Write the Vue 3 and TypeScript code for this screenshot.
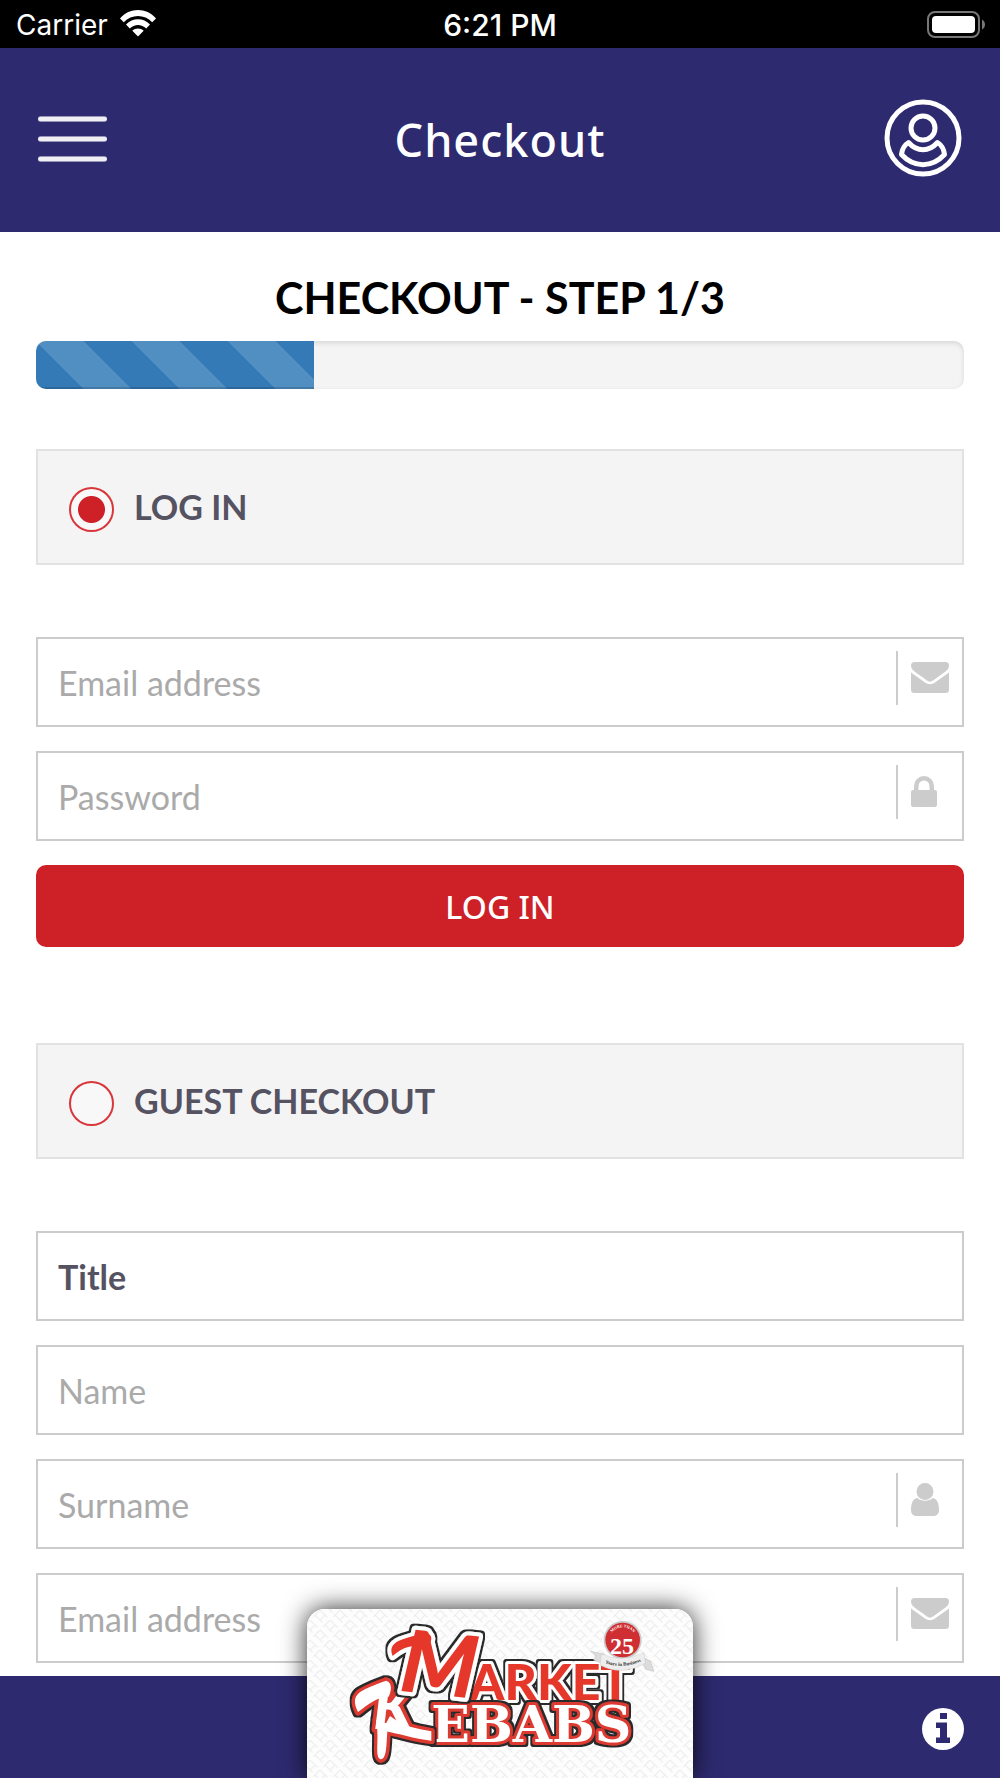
<script setup lang="ts">
import { ref } from 'vue'

type IconName = 'envelope' | 'lock' | 'user'

interface Field {
  id: string
  label: string
  type: string
  icon?: IconName
}

interface IconShape {
  width: number
  height: number
  path: string
}

const icons: Record<IconName, IconShape> = {
  envelope: {
    width: 38,
    height: 31,
    path: 'M3.500 0h31A3.500 3.500 0 0 1 38 3.500C38 6 36.500 8 34.500 9.500L22 18.500C20 20 18 20 16 18.500L3.500 9.500C1.500 8 0 6 0 3.500A3.500 3.500 0 0 1 3.500 0zM0 10.500L14 20.500C17.500 22.800 20.500 22.800 24 20.500L38 10.500V27.500A3.500 3.500 0 0 1 34.500 31H3.500A3.500 3.500 0 0 1 0 27.500z',
  },
  lock: {
    width: 26,
    height: 31,
    path: 'M3 14V10a10 10 0 0 1 20 0v4h1a2 2 0 0 1 2 2v13a2 2 0 0 1-2 2H2a2 2 0 0 1-2-2V16a2 2 0 0 1 2-2zM7.500 14h11V10a5.500 5.500 0 0 0-11 0z',
  },
  user: {
    width: 28,
    height: 33,
    path: 'M14 0a8.500 8.500 0 0 1 0 17a8.500 8.500 0 0 1 0-17zM6.500 15C9 18.500 19 18.500 21.500 15C26.500 15.500 28 21 28 27C28 30.500 26 33 22.500 33h-17C2 33 0 30.500 0 27C0 21 1.500 15.500 6.500 15z',
  },
}

const progress = 30
const mode = ref<'login' | 'guest'>('login')
const title = ref('')

const loginFields: Field[] = [
  { id: 'login-email', label: 'Email address', type: 'email', icon: 'envelope' },
  { id: 'login-password', label: 'Password', type: 'password', icon: 'lock' },
]

const guestFields: Field[] = [
  { id: 'guest-name', label: 'Name', type: 'text' },
  { id: 'guest-surname', label: 'Surname', type: 'text', icon: 'user' },
  { id: 'guest-email', label: 'Email address', type: 'email', icon: 'envelope' },
]
</script>

<template>
  <div class="page">
    <div class="status">
      <div class="carrier">
        <span>Carrier</span>
        <svg width="36" height="27" viewBox="0 0 36 27" aria-hidden="true">
          <path fill="#fff" d="M0 8.500C9.500-2.800 26.500-2.800 36 8.500L32.200 12.300C24.500 3.800 11.500 3.800 3.800 12.300zM6 14.600C12.500 7.600 23.500 7.600 30 14.600L26.200 18.400C21.500 13.700 14.500 13.700 9.800 18.400zM12.300 20.700C15.500 17.800 20.500 17.800 23.700 20.700L18 26.600z" />
        </svg>
      </div>
      <span class="clock">6:21 PM</span>
      <svg class="battery" width="59" height="28" viewBox="0 0 59 28" aria-hidden="true">
        <rect x="1" y="1" width="51" height="25" rx="7" fill="none" stroke="#777" stroke-width="2" />
        <rect x="5" y="5" width="43" height="17" rx="4" fill="#fff" />
        <path d="M55 8.500C59 10.500 59 16.500 55 18.500z" fill="#777" />
      </svg>
    </div>

    <header class="header">
      <button class="icon-button" type="button" aria-label="Menu">
        <svg width="69" height="48" viewBox="0 0 69 48">
          <path d="M3 5h63M3 25h63M3 45h63" stroke="#fff" stroke-width="6" stroke-linecap="round" opacity="0.5" />
          <path d="M2 5h65M2 25h65M2 45h65" stroke="#fff" stroke-width="4" stroke-linecap="round" opacity="0.85" />
        </svg>
      </button>
      <span class="header-title">Checkout</span>
      <button class="icon-button" type="button" aria-label="Account">
        <svg width="78" height="78" viewBox="0 0 78 78" fill="none" stroke="#fff" stroke-width="5">
          <circle cx="39" cy="39" r="36" />
          <circle cx="39" cy="29" r="12" />
          <path stroke-linejoin="round" d="M24.500 43.500C33 53 45 53 53.500 43.500C57.500 46 60 50.500 60.500 55.500C48 69 30 69 17.500 55.500C18 50.500 20.500 46 24.500 43.500z" />
        </svg>
      </button>
    </header>

    <main class="content">
      <h1 class="step">CHECKOUT - STEP 1/3</h1>
      <div class="progress" role="progressbar" aria-label="Checkout progress" :aria-valuenow="progress">
        <div class="progress-bar" :style="{ width: progress + '%' }"></div>
      </div>

      <form class="section" @submit.prevent>
        <label class="panel" for="mode-login">
          <input id="mode-login" v-model="mode" class="radio" type="radio" name="mode" value="login" />
          <span>LOG IN</span>
        </label>
        <div class="fields">
          <div v-for="field in loginFields" :key="field.id" class="field">
            <input :id="field.id" class="control" :type="field.type" :placeholder="field.label" :aria-label="field.label" />
            <span v-if="field.icon" class="field-icon">
              <svg :width="icons[field.icon].width" :height="icons[field.icon].height" aria-hidden="true">
                <path :d="icons[field.icon].path" fill="#ccc" fill-rule="evenodd" />
              </svg>
            </span>
          </div>
          <button class="submit" type="submit">LOG IN</button>
        </div>
      </form>

      <form class="section" @submit.prevent>
        <label class="panel" for="mode-guest">
          <input id="mode-guest" v-model="mode" class="radio" type="radio" name="mode" value="guest" />
          <span>GUEST CHECKOUT</span>
        </label>
        <div class="fields">
          <div class="field">
            <select v-model="title" class="control select" aria-label="Title">
              <option value="">Title</option>
              <option value="mr">Mr</option>
              <option value="mrs">Mrs</option>
              <option value="ms">Ms</option>
            </select>
          </div>
          <div v-for="field in guestFields" :key="field.id" class="field">
            <input :id="field.id" class="control" :type="field.type" :placeholder="field.label" :aria-label="field.label" />
            <span v-if="field.icon" class="field-icon">
              <svg :width="icons[field.icon].width" :height="icons[field.icon].height" aria-hidden="true">
                <path :d="icons[field.icon].path" fill="#ccc" fill-rule="evenodd" />
              </svg>
            </span>
          </div>
        </div>
      </form>
    </main>

    <footer class="footer">
      <a class="brand" href="#" aria-label="Market Kebabs">
        <svg width="386" height="169" viewBox="51 87 1158 507">
          <defs>
            <pattern id="weave" width="60" height="60" patternUnits="userSpaceOnUse">
              <path d="M0 0L30 30M15 -15L45 15M-15 15L15 45M30 30L60 60M45 15L75 45M15 45L45 75" stroke="#efefef" stroke-width="4" stroke-dasharray="32 10" fill="none" />
              <path d="M60 0L40 20M30 30L10 50M45 45L30 60M15 15L0 30" stroke="#efefef" stroke-width="4" fill="none" />
            </pattern>
            <filter id="outline" x="-10%" y="-20%" width="120%" height="140%">
              <feMorphology in="SourceAlpha" operator="dilate" radius="5" result="grown" />
              <feFlood flood-color="#2b2b2b" />
              <feComposite in2="grown" operator="in" result="edge" />
              <feMerge>
                <feMergeNode in="edge" />
                <feMergeNode in="SourceGraphic" />
              </feMerge>
            </filter>
            <path id="ribbon-line" d="M940 248Q998 270 1058 242" />
            <path id="seal-line" d="M957 183A41 41 0 0 1 1039 183" />
            <path id="swash-m" d="M308 228C290 184 340 176 404 160C430 160 430 184 408 206C374 190 340 200 308 228z" />
            <path id="swash-k" d="M204 396C176 340 214 330 288 302C306 306 306 330 296 350C262 350 236 372 204 396z" />
            <path id="drip-k" d="M258 420L296 432C286 470 296 536 272 538C252 530 270 480 258 420z" />
            <path id="leg-k" d="M300 408C340 440 380 446 424 454V482C370 476 330 460 276 452z" />
          </defs>
          <rect x="51" y="87" width="1158" height="507" fill="#fdfdfd" />
          <rect x="51" y="87" width="1158" height="507" fill="url(#weave)" />

          <g filter="url(#outline)">
            <text class="word market" x="538" y="359">ARKET</text>
          </g>
          <g filter="url(#outline)">
            <text class="word kebabs" x="424" y="486">EBABS</text>
          </g>
          <g filter="url(#outline)">
            <g class="edge-red">
              <use href="#swash-k" /><use href="#drip-k" /><use href="#leg-k" />
            </g>
            <text class="word initial-k" x="250" y="446">K</text>
            <g fill="#fff">
              <use href="#swash-k" /><use href="#drip-k" /><use href="#leg-k" />
            </g>
          </g>
          <g filter="url(#outline)">
            <use class="edge-white" href="#swash-m" />
            <text class="word initial-m" x="334" y="344" transform="rotate(6 440 260)">M</text>
            <use href="#swash-m" fill="#e5392a" />
          </g>

          <circle cx="998" cy="180" r="57" fill="#c9c9c9" />
          <circle cx="998" cy="180" r="52" fill="#cf2f33" />
          <text class="seal-text"><textPath href="#seal-line" startOffset="50%" text-anchor="middle">MORE THAN</textPath></text>
          <path d="M902 214L942 222L936 250L910 240L918 228zM1054 228L1082 244L1092 274L1066 268L1060 252z" fill="#dcdcdc" stroke="#aaa" stroke-width="1" />
          <path d="M934 222Q998 250 1062 218L1066 250Q998 290 930 256z" fill="#eee" stroke="#bbb" stroke-width="1" />
          <text class="seal-number" x="996" y="222" text-anchor="middle">25</text>
          <text class="ribbon-text"><textPath href="#ribbon-line" startOffset="50%" text-anchor="middle">Years in Business</textPath></text>
        </svg>
      </a>
      <button class="icon-button" type="button" aria-label="Information">
        <svg width="42" height="42" viewBox="0 0 42 42">
          <circle cx="21" cy="21" r="21" fill="#fff" />
          <path fill="#2e2a70" d="M18 5h7v6h-7zM14 14.500h11v15h3V35H14v-5.500h4V20h-4z" />
        </svg>
      </button>
    </footer>
  </div>
</template>

<style>
body {
  margin: 0;
  background: #fff;
}
</style>

<style scoped>
.page {
  display: flex;
  flex-direction: column;
  min-height: 100vh;
  font-family: Lato, "Liberation Sans", sans-serif;
  color: #555261;
}

.page *,
.page {
  box-sizing: border-box;
}

svg {
  display: block;
}

.status {
  display: grid;
  grid-template-columns: 1fr auto 1fr;
  align-items: center;
  height: 48px;
  padding: 2px 14px 0;
  background: #000;
  color: #fff;
  font-family: Inter, "Liberation Sans", sans-serif;
  font-size: 28px;
  line-height: 36px;
}

.carrier {
  display: flex;
  align-items: center;
  gap: 12px;
  padding-left: 2px;
}

.carrier svg {
  margin-bottom: 3px;
}

.clock {
  font-size: 30px;
  font-weight: 500;
}

.battery {
  justify-self: end;
}

.header {
  display: grid;
  grid-template-columns: 1fr auto 1fr;
  align-items: center;
  height: 184px;
  padding: 0 38px 4px;
  background: #2e2a70;
  color: #fff;
}

.header-title {
  padding-top: 4px;
  font-family: "Noto Sans", "Open Sans", sans-serif;
  font-size: 45px;
  font-weight: 500;
  line-height: 60px;
  letter-spacing: 1px;
}

.icon-button {
  padding: 0;
  border: 0;
  background: none;
  color: inherit;
  cursor: pointer;
}

.icon-button:last-child {
  justify-self: end;
}

.content {
  flex: 1;
  padding: 36px 36px 12px;
}

.step {
  margin: 0 0 13px;
  color: #000;
  font-size: 43px;
  font-weight: 700;
  line-height: 60px;
  text-align: center;
}

.progress {
  height: 48px;
  margin-bottom: 60px;
  overflow: hidden;
  border-radius: 10px;
  background: #f4f4f4;
  box-shadow: inset 0 2px 5px rgba(0, 0, 0, 0.12);
}

.progress-bar {
  height: 100%;
  background-color: #337ab7;
  background-image: linear-gradient(45deg, rgba(255, 255, 255, 0.15) 25%, transparent 25%, transparent 50%, rgba(255, 255, 255, 0.15) 50%, rgba(255, 255, 255, 0.15) 75%, transparent 75%);
  background-size: 96px 96px;
  box-shadow: inset 0 -2px 0 rgba(0, 0, 0, 0.15);
}

.section + .section {
  margin-top: 96px;
}

.panel {
  display: flex;
  align-items: center;
  gap: 20px;
  height: 116px;
  margin-bottom: 72px;
  padding: 0 31px;
  border: 2px solid #e2e2e2;
  background: #f4f4f4;
  font-size: 34px;
  font-weight: 700;
  line-height: 44px;
}

.radio {
  appearance: none;
  width: 45px;
  height: 45px;
  margin: 4px 0 0;
  border: 2px solid #d9363b;
  border-radius: 50%;
  background: #f8f8f8;
}

.radio:checked {
  background: radial-gradient(circle, #ce2027 13px, #f8f8f8 14px);
}

.fields {
  display: flex;
  flex-direction: column;
  gap: 24px;
}

.field {
  display: flex;
  height: 90px;
  border: 2px solid #ccc;
  background: #fff;
}

.control {
  flex: 1;
  min-width: 0;
  padding: 2px 20px 0;
  border: 0;
  outline: 0;
  background: none;
  color: #555261;
  font: 400 34px/44px Lato, "Liberation Sans", sans-serif;
}

.control::placeholder {
  color: #aaa;
  opacity: 1;
}

.select {
  appearance: none;
  font-weight: 700;
}

.field-icon {
  display: flex;
  align-items: center;
  width: 66px;
  height: 54px;
  margin-top: 12px;
  padding: 0 0 2px 13px;
  border-left: 2px solid #ccc;
}

.submit {
  height: 82px;
  padding: 2px 0 0;
  border: 0;
  border-radius: 10px;
  background: #ce2027;
  color: #fff;
  font-family: "Noto Sans", "Open Sans", sans-serif;
  font-size: 32px;
  font-weight: 500;
  line-height: 44px;
  cursor: pointer;
}

.footer {
  position: sticky;
  bottom: 0;
  display: flex;
  align-items: center;
  justify-content: flex-end;
  height: 102px;
  padding: 4px 36px 0;
  overflow-x: clip;
  background: #2e2a70;
}

.brand {
  position: absolute;
  bottom: 0;
  left: 50%;
  overflow: hidden;
  border-radius: 18px 18px 0 0;
  box-shadow: 0 0 26px rgba(0, 0, 0, 0.85);
  transform: translateX(-50%);
}

/* Logo lettering: the stroke is painted under the fill to form the inner rim. */
.word {
  paint-order: stroke;
  stroke-linejoin: round;
}

.market,
.initial-m {
  fill: #e5392a;
  stroke: #fff;
}

.kebabs,
.initial-k {
  fill: #fff;
  stroke: #dd3a30;
}

.market {
  font: 900 150px Lato, sans-serif;
  stroke-width: 18px;
}

.kebabs {
  font: 700 152px "DejaVu Serif", serif;
  stroke-width: 18px;
}

.initial-m {
  font: italic 900 258px Lato, sans-serif;
  stroke-width: 24px;
}

.initial-k {
  font: italic 900 180px Lato, sans-serif;
  stroke-width: 22px;
}

.edge-white {
  fill: #fff;
  stroke: #fff;
  stroke-width: 24px;
  stroke-linejoin: round;
}

.edge-red {
  fill: #dd3a30;
  stroke: #dd3a30;
  stroke-width: 20px;
  stroke-linejoin: round;
}

.seal-text {
  fill: #fff;
  font: 700 12px "Liberation Serif", serif;
}

.seal-number {
  fill: #fff;
  font: 700 72px "Liberation Serif", serif;
}

.ribbon-text {
  fill: #333;
  font: 700 15px "Liberation Serif", serif;
}
</style>
